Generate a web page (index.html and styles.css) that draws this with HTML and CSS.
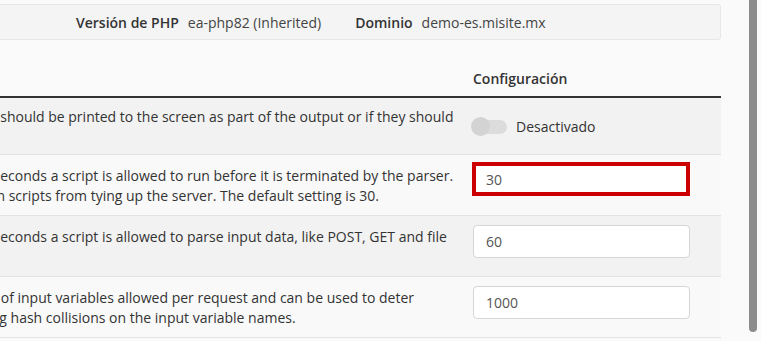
FILE: index.html
```html
<!DOCTYPE html>
<html lang="es">
  <head>
    <meta charset="UTF-8" />
    <meta name="viewport" content="width=device-width, initial-scale=1.0" />
    <title>MultiPHP INI Editor</title>
    <link rel="stylesheet" href="styles.css">
  </head>
  <body>
    <div class="layout">
      <div class="panel">
        <div class="infobar">
          <span class="label">Versión de PHP</span>
          <span class="value">ea-php82 (Inherited)</span>
          <span class="label label-gap">Dominio</span>
          <span class="value">demo-es.misite.mx</span>
        </div>

        <div class="ini-table">
          <div class="row head">
            <div class="desc"></div>
            <div class="conf"><span class="label">Configuración</span></div>
          </div>

          <div class="row odd short">
            <div class="desc">This determines whether errors should be printed to the screen as part of the output or if they should<br>be hidden from the user.</div>
            <div class="conf conf-mid">
              <span class="toggle"><span class="knob"></span></span>
              <span class="toggle-label">Desactivado</span>
            </div>
          </div>

          <div class="row even">
            <div class="desc">This sets the maximum time in seconds a script is allowed to run before it is terminated by the parser.<br>This helps prevent poorly written scripts from tying up the server. The default setting is 30.</div>
            <div class="conf">
              <input type="text" class="field field-error" value="30" />
            </div>
          </div>

          <div class="row odd">
            <div class="desc">This sets the maximum time in seconds a script is allowed to parse input data, like POST, GET and file<br>uploads.</div>
            <div class="conf">
              <input type="text" class="field" value="60" />
            </div>
          </div>

          <div class="row even">
            <div class="desc">This sets the maximum number of input variables allowed per request and can be used to deter<br>denial of service attacks involving hash collisions on the input variable names.</div>
            <div class="conf">
              <input type="text" class="field" value="1000" />
            </div>
          </div>
        </div>
      </div>

      <div class="scrollbar">
        <div class="thumb"></div>
      </div>
    </div>
  </body>
</html>
```

FILE: styles.css
```css
html,
body {
  margin: 0;
  height: 100%;
  overflow: hidden;
}
body {
  font-family: "Open Sans", Arial, sans-serif;
  font-size: 14px;
  color: #333;
  background-color: #fafafa;
}
.layout {
  display: flex;
  height: 100%;
}
.panel {
  width: 947px;
  margin-left: -226px;
  flex-shrink: 0;
}
.infobar {
  margin-top: 4px;
  height: 34px;
  display: flex;
  align-items: center;
  padding-left: 301px;
  background-color: #f4f4f4;
  border: 1px solid #e7e7e7;
  border-radius: 3px;
}
.label {
  font-weight: 600;
  color: #333;
}
.value {
  margin-left: 9px;
  color: #444;
}
.label-gap {
  margin-left: 34px;
}
.ini-table {
  display: flex;
  flex-direction: column;
}
.row {
  display: grid;
  grid-template-columns: 691px 256px;
  min-height: 60px;
  border-bottom: 1px solid #e3e3e3;
}
.row.short {
  min-height: 56px;
}
.row.head {
  min-height: 56px;
  border-bottom: 2px solid #333;
  align-items: end;
}
.row.head .conf {
  padding: 0 0 7px 8px;
}
.odd {
  background-color: #f2f2f2;
}
.even {
  background-color: #f9f9f9;
}
.desc {
  align-self: center;
  padding: 2px 0 0 16px;
  line-height: 20px;
  white-space: nowrap;
  overflow: hidden;
}
.conf {
  line-height: 20px;
  padding: 9px 31px 9px 8px;
}
.conf-mid {
  align-self: center;
  display: flex;
  align-items: center;
  gap: 9px;
  padding-top: 2px;
  padding-bottom: 0;
}
.toggle {
  position: relative;
  width: 31px;
  height: 14px;
  margin-left: 3px;
  border-radius: 7px;
  background-color: #dcdcdc;
}
.knob {
  position: absolute;
  left: -5px;
  top: -3px;
  width: 19px;
  height: 19px;
  border-radius: 50%;
  background-color: #d3d3d3;
}
.toggle-label {
  color: #333;
}
.field {
  box-sizing: border-box;
  display: block;
  width: 217px;
  height: 33px;
  padding: 0 12px;
  font-family: "Open Sans", Arial, sans-serif;
  font-size: 14px;
  color: #555;
  background-color: #fff;
  border: 1px solid #d6d6d6;
  border-radius: 4px;
}
.field-error {
  width: 218px;
  height: 34px;
  margin: -2px 0 0 -1px;
  padding-left: 10px;
  border: 4px solid #cc0000;
  border-radius: 0;
}
.scrollbar {
  width: 40px;
  flex-shrink: 0;
  display: flex;
  justify-content: flex-end;
}
.thumb {
  width: 8px;
  height: 332px;
  margin-right: 4px;
  background-color: #8b8b8b;
  border-radius: 0 0 4px 4px;
}
```
